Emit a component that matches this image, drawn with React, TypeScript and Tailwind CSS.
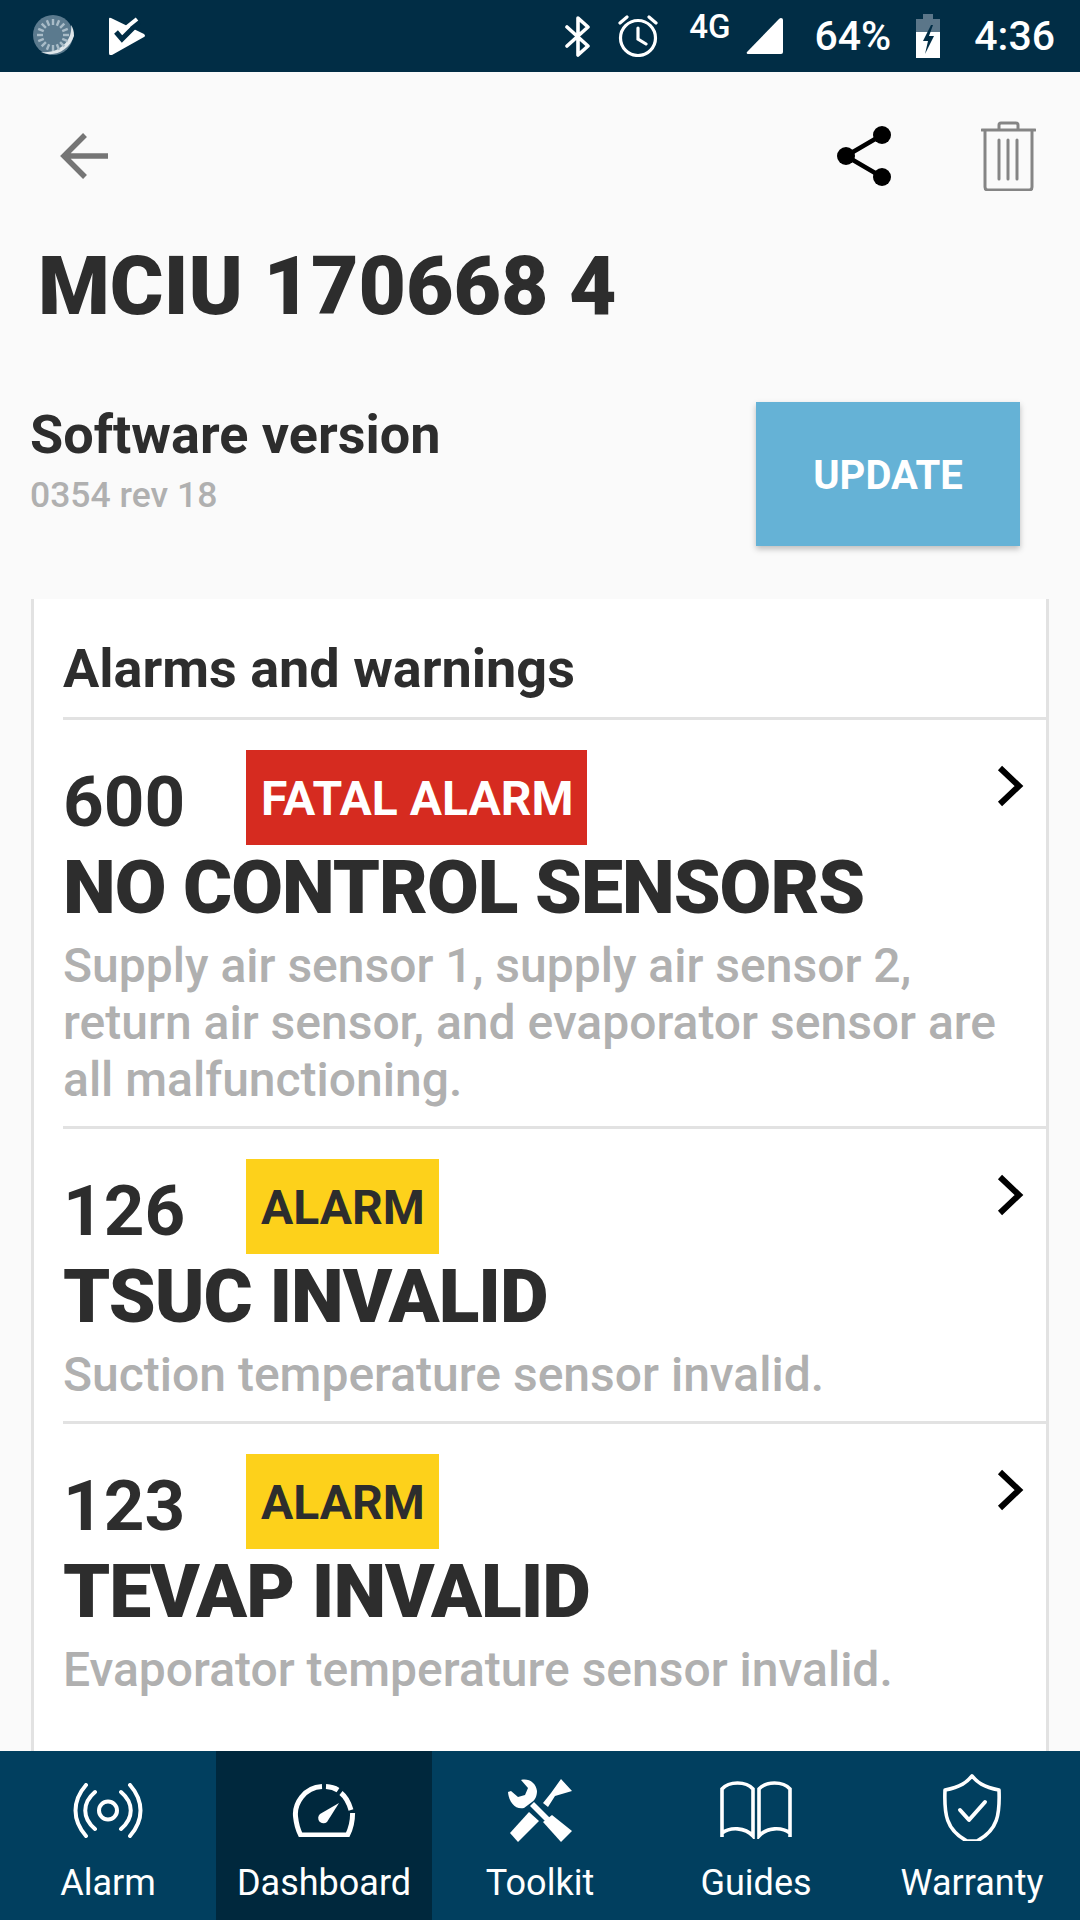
import React from "react";

const alarms = [
  {
    code: "600",
    level: "FATAL ALARM",
    title: "NO CONTROL SENSORS",
    lines: [
      "Supply air sensor 1, supply air sensor 2,",
      "return air sensor, and evaporator sensor are",
      "all malfunctioning.",
    ],
  },
  { code: "126", level: "ALARM", title: "TSUC INVALID", lines: ["Suction temperature sensor invalid."] },
  { code: "123", level: "ALARM", title: "TEVAP INVALID", lines: ["Evaporator temperature sensor invalid."] },
];

const ticks = Array.from({ length: 16 }, (_, i) => i * 22.5);

const StatusBar = () => (
  <div className="h-[72px] bg-[#012d45] flex items-center text-white shrink-0">
    <svg width="44" height="44" viewBox="0 0 44 44" className="ml-[32px]">
      <circle cx="21" cy="21" r="20" fill="#5b7a8e" />
      <path d="M9 38c12 6 28-1 33-16 0-5-1-8-3-11 2 13-9 29-30 27z" fill="#dfe6ea" />
      {ticks.map((deg) => (
        <path key={deg} d="M21 5v6" stroke="#a9bcc8" strokeWidth="2.4" transform={`rotate(${deg} 21 21)`} />
      ))}
    </svg>
    <svg width="36" height="38" viewBox="0 0 36 38" className="ml-[33px]">
      <path d="M0 2q0-2 2-1l33 16q2 2 0 3L3 38q-3 1-3-2z" fill="#fff" />
      <path d="M7 15l6 7L30 5" fill="none" stroke="#012d45" strokeWidth="5" />
      <path d="M18 10l10-8" fill="none" stroke="#fff" strokeWidth="4" />
    </svg>
    <div className="ml-auto flex items-center">
      <svg width="25" height="41" viewBox="0 0 25 41" fill="none" stroke="#fff" strokeWidth="3.6" strokeLinecap="round" strokeLinejoin="round">
        <path d="M2 11l21 19-10 9V2l10 9L2 30" />
      </svg>
      <svg width="40" height="42" viewBox="0 0 40 42" fill="none" stroke="#fff" strokeWidth="3.2" strokeLinecap="round" className="ml-[28px]">
        <circle cx="20" cy="23" r="17.5" />
        <path d="M20 13v11l8 5M2 8l7-6M38 8l-7-6" />
      </svg>
      <span className="ml-[31px] -mt-[20px] text-[33px] font-medium leading-none">4G</span>
      <svg width="37" height="36" viewBox="0 0 37 36" className="ml-[16px]">
        <path d="M35 0q2 0 2 2v32q0 2-2 2H2q-2 0-1-2L33 1q1-1 2-1z" fill="#fff" />
      </svg>
      <span className="ml-[31px] text-[41px] font-medium leading-none">64%</span>
      <svg width="24" height="44" viewBox="0 0 24 44" className="ml-[25px]">
        <path d="M7 0h10v5h7v13H0V5h7z" fill="#5b7689" />
        <path d="M0 18h24v26H0z" fill="#fff" />
        <path d="M15 11L7 27h5l-3 13 9-18h-5l4-11z" fill="#012d45" />
      </svg>
      <span className="ml-[34px] mr-[25px] text-[41px] font-medium leading-none">4:36</span>
    </div>
  </div>
);

const Toolbar = () => (
  <div className="h-[168px] flex items-center justify-between shrink-0">
    <svg width="48" height="48" viewBox="0 0 48 48" fill="none" stroke="#757575" strokeWidth="5.5" className="ml-[60px]">
      <path d="M48 24H4M25 3L4 24l21 21" />
    </svg>
    <div className="flex items-center">
      <svg width="54" height="60" viewBox="0 0 54 60" fill="#000">
        <circle cx="45" cy="9" r="9" />
        <circle cx="9" cy="30" r="9" />
        <circle cx="45" cy="51" r="9" />
        <path d="M45 9L9 30l36 21" fill="none" stroke="#000" strokeWidth="4.5" />
      </svg>
      <svg width="55" height="70" viewBox="0 0 55 70" fill="none" stroke="#858585" strokeWidth="3" strokeLinecap="round" className="ml-[90px] mr-[44px]">
        <path d="M1 9h53" />
        <path d="M18 8V4q0-2 2-2h15q2 0 2 2v4M4 10v56q0 3 3 3h41q3 0 3-3V10" />
        <path d="M18 19v39M27 19v39M36 19v39" />
      </svg>
    </div>
  </div>
);

const AlarmRow = ({ alarm, last }: { alarm: (typeof alarms)[number]; last: boolean }) => (
  <div className="ml-[29px]">
    <div className={`pt-[30px] pb-[18px] ${last ? "" : "border-b-[3px] border-[#e2e2e2]"}`}>
      <div className="flex items-start h-[95px]">
        <span className="w-[183px] text-[71px] font-bold leading-[104px] text-[#2d2d2d]">{alarm.code}</span>
        <span
          className={`h-[95px] pl-[15px] pr-[14px] pt-[2px] flex items-center text-[48px] font-bold ${
            alarm.level === "ALARM" ? "bg-[#fdd11b] text-[#2d2d2d]" : "bg-[#d62b20] text-white"
          }`}
        >
          {alarm.level}
        </span>
        <svg width="28" height="42" viewBox="0 0 28 42" fill="none" stroke="#000" strokeWidth="6" className="ml-auto mr-[22px] mt-[15px]">
          <path d="M4 3l19 18L4 39" />
        </svg>
      </div>
      <div className="h-[92px] pb-[7px] flex items-center text-[75px] font-black leading-none text-[#2d2d2d] tracking-[-1px] whitespace-nowrap">
        {alarm.title}
      </div>
      {alarm.lines.map((line) => (
        <div key={line} className="h-[57px] text-[48px] leading-[57px] font-medium text-[#b0b0b0] whitespace-nowrap">
          {line}
        </div>
      ))}
    </div>
  </div>
);

const navItems = ["Alarm", "Dashboard", "Toolkit", "Guides", "Warranty"];

const NavIcon = ({ name }: { name: string }) => {
  if (name === "Alarm")
    return (
      <svg width="70" height="55" viewBox="0 0 68 55" fill="none" stroke="#fff" strokeWidth="4" strokeLinecap="round">
        <circle cx="34" cy="27.5" r="9" />
        <path d="M21 9C8 20 8 35 21 46M47 9c13 11 13 26 0 37M12 2C-2 18-2 37 12 53M56 2c14 16 14 35 0 51" />
      </svg>
    );
  if (name === "Dashboard")
    return (
      <svg width="64" height="53" viewBox="0 0 62 53" fill="none" stroke="#fff" strokeWidth="5">
        <path d="M29 2.6C11 3.5 1 20 2.6 33c.6 6 2 12 5 18h47c3-6 5-13 5-22" />
        <path d="M33 2.6c4.5.2 9 1.5 12 3.5M48 9c5 4 8 10 10 17" />
        <path d="M46 19L27 30a5 5 0 0 0 7 8z" fill="#fff" stroke="none" />
      </svg>
    );
  if (name === "Toolkit")
    return (
      <svg width="64" height="63" viewBox="0 0 64 63" fill="#fff">
        <path d="M13 1c8-2 15 3 16 11 0 5-2 9-5 11l-8 6C8 31 1 24 0 13l3-1 7 6 7-2 3-7z" />
        <path d="M26 23l16 16-4 4-16-16z" />
        <path d="M44 36l20 16-11 11-18-20z" />
        <path d="M21 33l10 9-21 21-8-9z" />
        <path d="M53 0l11 12-17 5-7 11-5-4 8-10z" />
      </svg>
    );
  if (name === "Guides")
    return (
      <svg width="72" height="58" viewBox="0 0 72 58" fill="none" stroke="#fff" strokeWidth="3.6">
        <path d="M2 56V8C9 0 26 0 33 8v47c-8-9-23-9-31-3M70 56V8C63 0 46 0 39 8v47c8-9 23-9 31-3" />
      </svg>
    );
  return (
    <svg width="60" height="67" viewBox="0 0 58 67" fill="none" stroke="#fff" strokeWidth="3.6" strokeLinejoin="round" className="-mt-[5px]">
      <path d="M29 2c5 6 11 11 27 14 1 24-1 40-22 51H24C3 56 1 40 2 16 18 13 24 8 29 2z" />
      <path d="M17 36l9 10 16-18" strokeWidth="4" strokeLinecap="round" />
    </svg>
  );
};

const BottomNav = () => (
  <div className="absolute left-0 right-0 bottom-0 h-[169px] grid grid-cols-5 bg-[#013f5f]">
    {navItems.map((item) => (
      <div
        key={item}
        className={`flex flex-col items-center text-white ${item === "Dashboard" ? "bg-[#00283d]" : ""}`}
      >
        <div className="h-[118px] -mb-[11px] flex items-center justify-center">
          <NavIcon name={item} />
        </div>
        <span className="text-[36px] leading-[50px]">{item}</span>
      </div>
    ))}
  </div>
);

export default function App() {
  return (
    <div className="relative w-[1080px] h-[1920px] overflow-hidden bg-[#fafafa] flex flex-col font-['Roboto',sans-serif] text-[#2d2d2d]">
      <StatusBar />
      <Toolbar />
      <h1 className="ml-[38px] mt-[1px] h-[90px] flex items-center text-[82px] font-black leading-none shrink-0">
        MCIU 170668 4
      </h1>
      <div className="mt-[71px] h-[144px] pl-[30px] pr-[60px] flex justify-between shrink-0">
        <div>
          <div className="mt-[3px] text-[54px] leading-[60px] font-bold">Software version</div>
          <div className="mt-[8px] text-[35.5px] leading-[44px] font-medium text-[#b0b0b0]">0354 rev 18</div>
        </div>
        <button className="w-[264px] h-[144px] pt-[3px] bg-[#65b2d6] text-white text-[40px] font-bold shadow-[0_3px_6px_rgba(0,0,0,0.25)]">
          UPDATE
        </button>
      </div>
      <div className="mt-[53px] mx-[31px] flex-1 bg-white border-x-[3px] border-[#e2e2e2]">
        <div className="ml-[29px] h-[121px] pt-[20px] flex items-center border-b-[3px] border-[#e2e2e2] text-[54px] font-bold">
          Alarms and warnings
        </div>
        {alarms.map((alarm, i) => (
          <AlarmRow key={alarm.code} alarm={alarm} last={i === alarms.length - 1} />
        ))}
      </div>
      <BottomNav />
    </div>
  );
}
